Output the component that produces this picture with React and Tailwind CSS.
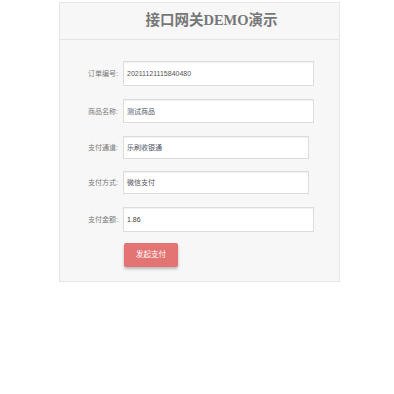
import React from 'react';

const rows = [
  { label: '订单编号:', value: '20211121115840480', w: 'w-[191px]', mt: 'mt-[21px]', h: 'h-[25px]', tone: 'text-[#555]' },
  { label: '商品名称:', value: '测试商品', w: 'w-[191px]', mt: 'mt-[13px]', h: 'h-[24px]', tone: 'text-[#4f5668]' },
  { label: '支付通道:', value: '乐刷收银通', w: 'w-[186px]', mt: 'mt-[13px]', h: 'h-[23px]', tone: 'text-[#4f5668]' },
  { label: '支付方式:', value: '微信支付', w: 'w-[186px]', mt: 'mt-[12px]', h: 'h-[23px]', tone: 'text-[#555]' },
  { label: '支付金额:', value: '1.86', w: 'w-[191px]', mt: 'mt-[13px]', h: 'h-[25px]', tone: 'text-[#444]' },
];

const App = () => {
  return (
    <div className="min-h-[394px] bg-white pt-[2px]" style={{ fontFamily: '"Liberation Sans", "Noto Sans CJK SC", sans-serif' }}>
      <div className="ml-[59px] w-[281px] border border-[#e6e6e6] bg-[#f7f7f7] pb-[14px]">
        {/* Header */}
        <div className="flex h-[37px] items-center justify-center border-b border-[#e3e3e3] pl-[24px]">
          <h1
            className="text-[14.5px] font-bold text-[#777]"
            style={{ fontFamily: '"Liberation Serif", "Noto Sans CJK SC", serif' }}
          >
            接口网关DEMO演示
          </h1>
        </div>

        {/* Form */}
        {rows.map((row) => (
          <div key={row.label} className={`flex items-center ${row.mt}`}>
            <label className="w-[58px] text-right text-[7px] leading-none text-[#777]">{row.label}</label>
            <div
              className={`ml-[5px] flex items-center border border-[#dcdcdc] bg-white px-[3px] text-[7px] leading-none shadow-[inset_0_1px_1px_rgba(0,0,0,0.06)] ${row.w} ${row.h} ${row.tone}`}
            >
              {row.value}
            </div>
          </div>
        ))}

        <div className="mt-[11px] pl-[64px]">
          <button className="block h-[24px] w-[54px] rounded-[2px] bg-[#e47474] text-[7.5px] leading-none text-white shadow-[0_2px_3px_rgba(0,0,0,0.25)]">
            发起支付
          </button>
        </div>
      </div>
    </div>
  );
};

export default App;
